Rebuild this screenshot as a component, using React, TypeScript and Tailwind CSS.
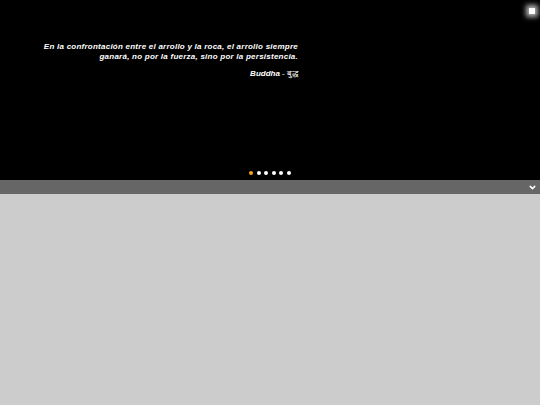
import { ChevronDown } from 'lucide-react';

export default function App() {
  const dots = [0, 1, 2, 3, 4, 5];

  return (
    <div className="w-[540px] h-[405px] bg-[#cccccc] flex flex-col overflow-hidden">
      <div className="relative h-[180px] bg-black shrink-0">
        <div className="absolute top-[8px] left-[529px] w-[6px] h-[6px] bg-white shadow-[0_0_5px_3px_rgba(255,255,255,0.7)]" />

        <div className="pt-[42px] w-[298px] font-['Liberation_Sans',sans-serif]">
          <p className="text-right text-white text-[8px] leading-[9.5px] font-bold italic tracking-[0.03em] whitespace-nowrap">
            En la confrontación entre el arrollo y la roca, el arrollo siempre
            <br />
            ganará, no por la fuerza, sino por la persistencia.
          </p>
          <p className="mt-[8px] text-right text-white text-[8px] leading-[10px] whitespace-nowrap">
            <span className="font-bold italic">Buddha</span> - बुद्ध
          </p>
        </div>

        <div className="absolute left-[249px] top-[171px] flex gap-[3.6px]">
          {dots.map((d) => (
            <span
              key={d}
              className={d === 0 ? 'w-[4px] h-[4px] rounded-full bg-[#f5a623]' : 'w-[4px] h-[4px] rounded-full bg-white'}
            />
          ))}
        </div>
      </div>

      <div className="h-[14px] bg-[#666666] flex items-center justify-end pr-[3px] shrink-0">
        <ChevronDown className="w-[9px] h-[9px] text-white" strokeWidth={4} />
      </div>

      <div className="flex-1 bg-[#cccccc]" />
    </div>
  );
}
